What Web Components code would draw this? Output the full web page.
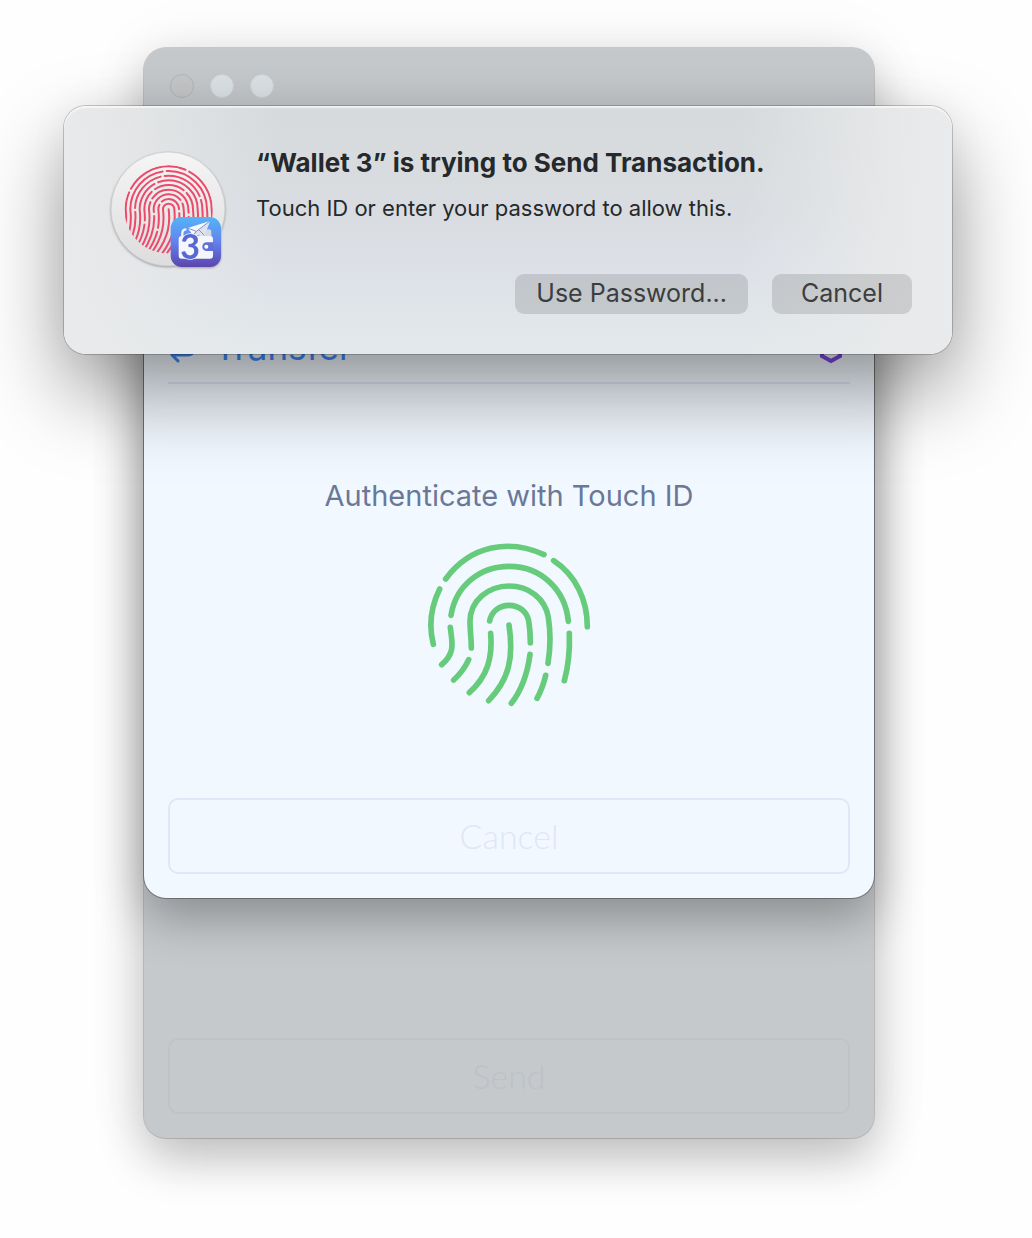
<!DOCTYPE html>
<html lang="en">
<head>
<meta charset="utf-8">
<meta name="viewport" content="width=device-width, initial-scale=1">
<title>Wallet 3</title>
<style>
	body {
		margin: 0;
		position: relative;
		background: #fefefe;
		font-family: Inter, "Liberation Sans", sans-serif;
	}
	main {
		padding: 48px 158px 100px 144px;
	}
	auth-dialog {
		position: absolute;
		top: 106px;
		left: 64px;
		right: 80px;
	}
</style>
</head>
<body>
<main>
	<wallet-window>
		<auth-sheet heading="Transfer">
			<touch-print></touch-print>
			<ghost-button slot="action">Cancel</ghost-button>
		</auth-sheet>
		<ghost-button slot="footer" dimmed>Send</ghost-button>
	</wallet-window>
</main>
<auth-dialog>
	<app-badge slot="icon"></app-badge>
	<span slot="title">“Wallet 3” is trying to Send Transaction.</span>
	<span slot="message">Touch ID or enter your password to allow this.</span>
	<push-button slot="buttons">Use Password...</push-button>
	<push-button slot="buttons">Cancel</push-button>
</auth-dialog>

<script>
function define(name, html, setup) {
	const template = document.createElement('template');
	template.innerHTML = html;

	customElements.define(name, class extends HTMLElement {
		constructor() {
			super();
			const root = this.attachShadow({ mode: 'open' });
			root.appendChild(template.content.cloneNode(true));
			if (setup) setup(this, root);
		}
	});
}

// main window, greyed out behind the sheet
define('wallet-window', `
	<style>
		:host {
			display: flex;
			flex-direction: column;
			border-radius: 22px;
			background: #c6c9cc;
			box-shadow: 0 0 0 1px rgba(0, 0, 0, .16), 0 20px 48px rgba(0, 0, 0, .24), 0 0 70px rgba(0, 0, 0, .06);
		}
		.bar {
			display: flex;
			gap: 16px;
			padding: 26px;
		}
		.bar i {
			box-sizing: border-box;
			width: 24px;
			height: 24px;
			border-radius: 50%;
			background: #dde2e6;
			border: 1px solid #cfd3d6;
		}
		.bar i:first-child {
			background: #c5c7c9;
			border-color: #b3b5b7;
		}
		.content {
			margin-top: 192px;
		}
		.footer {
			padding: 140px 24px 24px;
		}
	</style>
	<div class="bar"><i></i><i></i><i></i></div>
	<div class="content"><slot></slot></div>
	<div class="footer"><slot name="footer"></slot></div>
`);

define('auth-sheet', `
	<style>
		:host {
			display: block;
			padding: 0 24px 24px;
			border-radius: 0 0 22px 22px;
			background: #f2f8ff;
			box-shadow: 0 0 0 1px rgba(0, 0, 0, .3), 0 20px 48px rgba(0, 0, 0, .3);
		}
		header {
			display: flex;
			align-items: center;
			gap: 14px;
			height: 66px;
			border-bottom: 2px solid #dfe5f6;
		}
		h1 {
			flex: 1;
			margin: 0;
			padding-bottom: 4px;
			font-size: 35px;
			line-height: 40px;
			font-weight: 400;
			color: #3f8cff;
		}
		svg {
			display: block;
		}
		.body {
			display: flex;
			flex-direction: column;
			align-items: center;
			gap: 30px;
			padding: 96px 0 90px;
		}
		p {
			margin: 0;
			font-size: 29px;
			line-height: 32px;
			color: #6a7898;
		}
	</style>
	<header>
		<svg width="32" height="28" viewBox="0 0 32 28" fill="none" stroke="#3f8cff" stroke-width="3" stroke-linecap="round" stroke-linejoin="round">
			<path d="M25 8V15Q25 20 20 20H4M10 14 4 20 10 26"/>
		</svg>
		<h1></h1>
		<svg width="38" height="32" viewBox="0 0 38 32" fill="none" stroke="#7c48e6" stroke-width="4">
			<path d="M19 4 28 9V23L19 28 10 23V9Z"/>
		</svg>
	</header>
	<div class="body">
		<p>Authenticate with Touch ID</p>
		<slot></slot>
	</div>
	<slot name="action"></slot>
`, (host, root) => {
	root.querySelector('h1').textContent = host.getAttribute('heading');
});

define('touch-print', `
	<style>
		:host {
			display: block;
		}
		svg {
			display: block;
		}
	</style>
	<svg width="166" height="166" viewBox="48 36 498 498" fill="none" stroke="#66cb7b" stroke-width="17" stroke-linecap="round">
		<path d="M107 147C182 45 300 26 402 74"/>
		<path d="M431 92C498 136 532 210 532 290"/>
		<path d="M89 177C63 230 55 285 70 343"/>
		<path d="M123 256C137 168 208 109 298 109C392 109 466 178 475 274"/>
		<path d="M184 354C184 322 180 305 180 275C180 212 235 168 297 168C357 168 406 206 415 262C423 315 422 352 414 400"/>
		<path d="M239 273C244 245 268 226 297 226C327 226 350 244 356 272C360 295 361 315 361 338"/>
		<path d="M297 285C312 385 297 448 236 512"/>
		<path d="M242 310C248 380 234 438 178 488"/>
		<path d="M121 292C125 335 139 366 95 404"/>
		<path d="M176 389C165 413 150 433 131 450"/>
		<path d="M360 373C353 427 335 480 304 520"/>
		<path d="M407 436C401 462 392 485 381 505"/>
		<path d="M478 310C480 362 475 408 463 452"/>
	</svg>
`);

define('ghost-button', `
	<style>
		:host {
			display: block;
		}
		button {
			display: block;
			box-sizing: border-box;
			width: 100%;
			height: 76px;
			padding: 0;
			border: 2px solid #e0e7f7;
			border-radius: 10px;
			background: transparent;
			font-family: Lato, sans-serif;
			font-size: 34px;
			font-weight: 300;
			line-height: 40px;
			color: #dfe6f7;
		}
		:host([dimmed]) button {
			color: #bdc1c8;
			border-color: #bfc3c8;
		}
	</style>
	<button type="button"><slot></slot></button>
`);

define('push-button', `
	<style>
		:host {
			display: block;
		}
		button {
			display: block;
			height: 40px;
			min-width: 140px;
			padding: 0 21px 2px;
			border: 0;
			border-radius: 9px;
			background: rgba(0, 0, 0, .12);
			font: inherit;
			font-size: 25px;
			line-height: 38px;
			color: #3b3e40;
		}
	</style>
	<button type="button"><slot></slot></button>
`);

// red fingerprint disc with the wallet app icon in its corner
define('app-badge', `
	<style>
		:host {
			display: block;
		}
		svg {
			display: block;
			overflow: visible;
			filter: drop-shadow(0 1px 1px rgba(0, 0, 0, .3));
		}
	</style>
	<svg width="114" height="116" viewBox="34 36 342 348" role="img" aria-label="Touch ID">
		<defs>
			<linearGradient id="disc" x2="0" y2="1">
				<stop offset="0" stop-color="#f5f5f5"/>
				<stop offset="1" stop-color="#dddddd"/>
			</linearGradient>
			<linearGradient id="app" x2="0" y2="1">
				<stop offset="0" stop-color="#55b4f8"/>
				<stop offset=".5" stop-color="#6282ee"/>
				<stop offset="1" stop-color="#5b45ad"/>
			</linearGradient>
			<clipPath id="round"><circle cx="207" cy="208" r="133"/></clipPath>
		</defs>
		<circle cx="205" cy="207" r="171" fill="url(#disc)" stroke="#c4c6c8" stroke-width="2"/>
		<g class="ridges" clip-path="url(#round)" fill="none" stroke="#ec4a6a" stroke-width="6" stroke-linecap="round"></g>
		<rect x="213" y="231" width="151" height="150" rx="34" fill="url(#app)"/>
		<path d="M248 292V280Q248 268 260 268" fill="none" stroke="#f3f5fb" stroke-width="7"/>
		<path d="M300 268H328Q335 268 335 278V292H300Z" fill="#d5dae8"/>
		<rect x="237" y="288" width="103" height="68" rx="9" fill="#f5f6fb"/>
		<path d="M264 264 331 243 314 286H280Z" fill="#f8f9fd"/>
		<path d="M290 274 331 243 314 286H280Z" fill="#dde2ef"/>
		<path d="M264 264 290 274 331 243M290 274 280 286M298 270 314 286" fill="none" stroke="#7f93cc" stroke-width="3"/>
		<path d="M341 307H321A13 13 0 0 0 321 333H341Z" fill="#6070d8"/>
		<circle cx="320" cy="320" r="6" fill="#fff"/>
		<text x="242" y="358" font-family="Lato" font-weight="700" font-size="102" fill="#5968d2" stroke="#f5f6fb" stroke-width="5" paint-order="stroke">3</text>
	</svg>
`, (host, root) => {
	const ridges = root.querySelector('.ridges');
	const gaps = [400, 70, 118, 160, 92, 230, 130, 300, 190];
	let d = '<path d="M207 208C212 250 207 290 172 338"/>';
	for (let i = 0; i < 9; i++) {
		const r = 17 + i * 14;
		const left = 207 - r;
		const right = 207 + r;
		d += `<path stroke-dasharray="${gaps[i]} 12" d="M${left - 34} 338C${left} 290 ${left + 5} 250 ${left} 208A${r} ${r} 0 0 1 ${right} 208C${right + 4} 250 ${right} 290 ${right - 35} 338"/>`;
	}
	ridges.innerHTML = d;
});

define('auth-dialog', `
	<style>
		:host {
			display: flex;
			box-sizing: border-box;
			gap: 31px;
			padding: 41px 40px 40px 47px;
			border-radius: 22px;
			background:
				linear-gradient(90deg, #e9eaeb 0, rgba(233, 234, 235, 0) 24%, rgba(233, 234, 235, 0) 76%, #e9eaeb 97%),
				linear-gradient(#d6dadc 0, #d9dde1 45%, #dde1e7 66%, #e3e9eb 100%);
			box-shadow: inset 0 2px 1px rgba(255, 255, 255, .6), 0 0 0 1px rgba(0, 0, 0, .2), 0 38px 84px rgba(0, 0, 0, .4), 0 0 40px rgba(0, 0, 0, .05);
		}
		.icon {
			padding-top: 5px;
		}
		.text {
			flex: 1;
			display: flex;
			flex-direction: column;
		}
		h2 {
			margin: 0;
			font-size: 26px;
			line-height: 32px;
			font-weight: 700;
			color: #25292b;
		}
		p {
			margin: 13px 0 0;
			font-size: 22px;
			line-height: 32px;
			color: #25292b;
		}
		.buttons {
			display: flex;
			justify-content: flex-end;
			gap: 24px;
			margin-top: 50px;
		}
	</style>
	<div class="icon"><slot name="icon"></slot></div>
	<div class="text">
		<h2><slot name="title"></slot></h2>
		<p><slot name="message"></slot></p>
		<div class="buttons"><slot name="buttons"></slot></div>
	</div>
`, host => {
	host.setAttribute('role', 'dialog');
});
</script>
</body>
</html>
